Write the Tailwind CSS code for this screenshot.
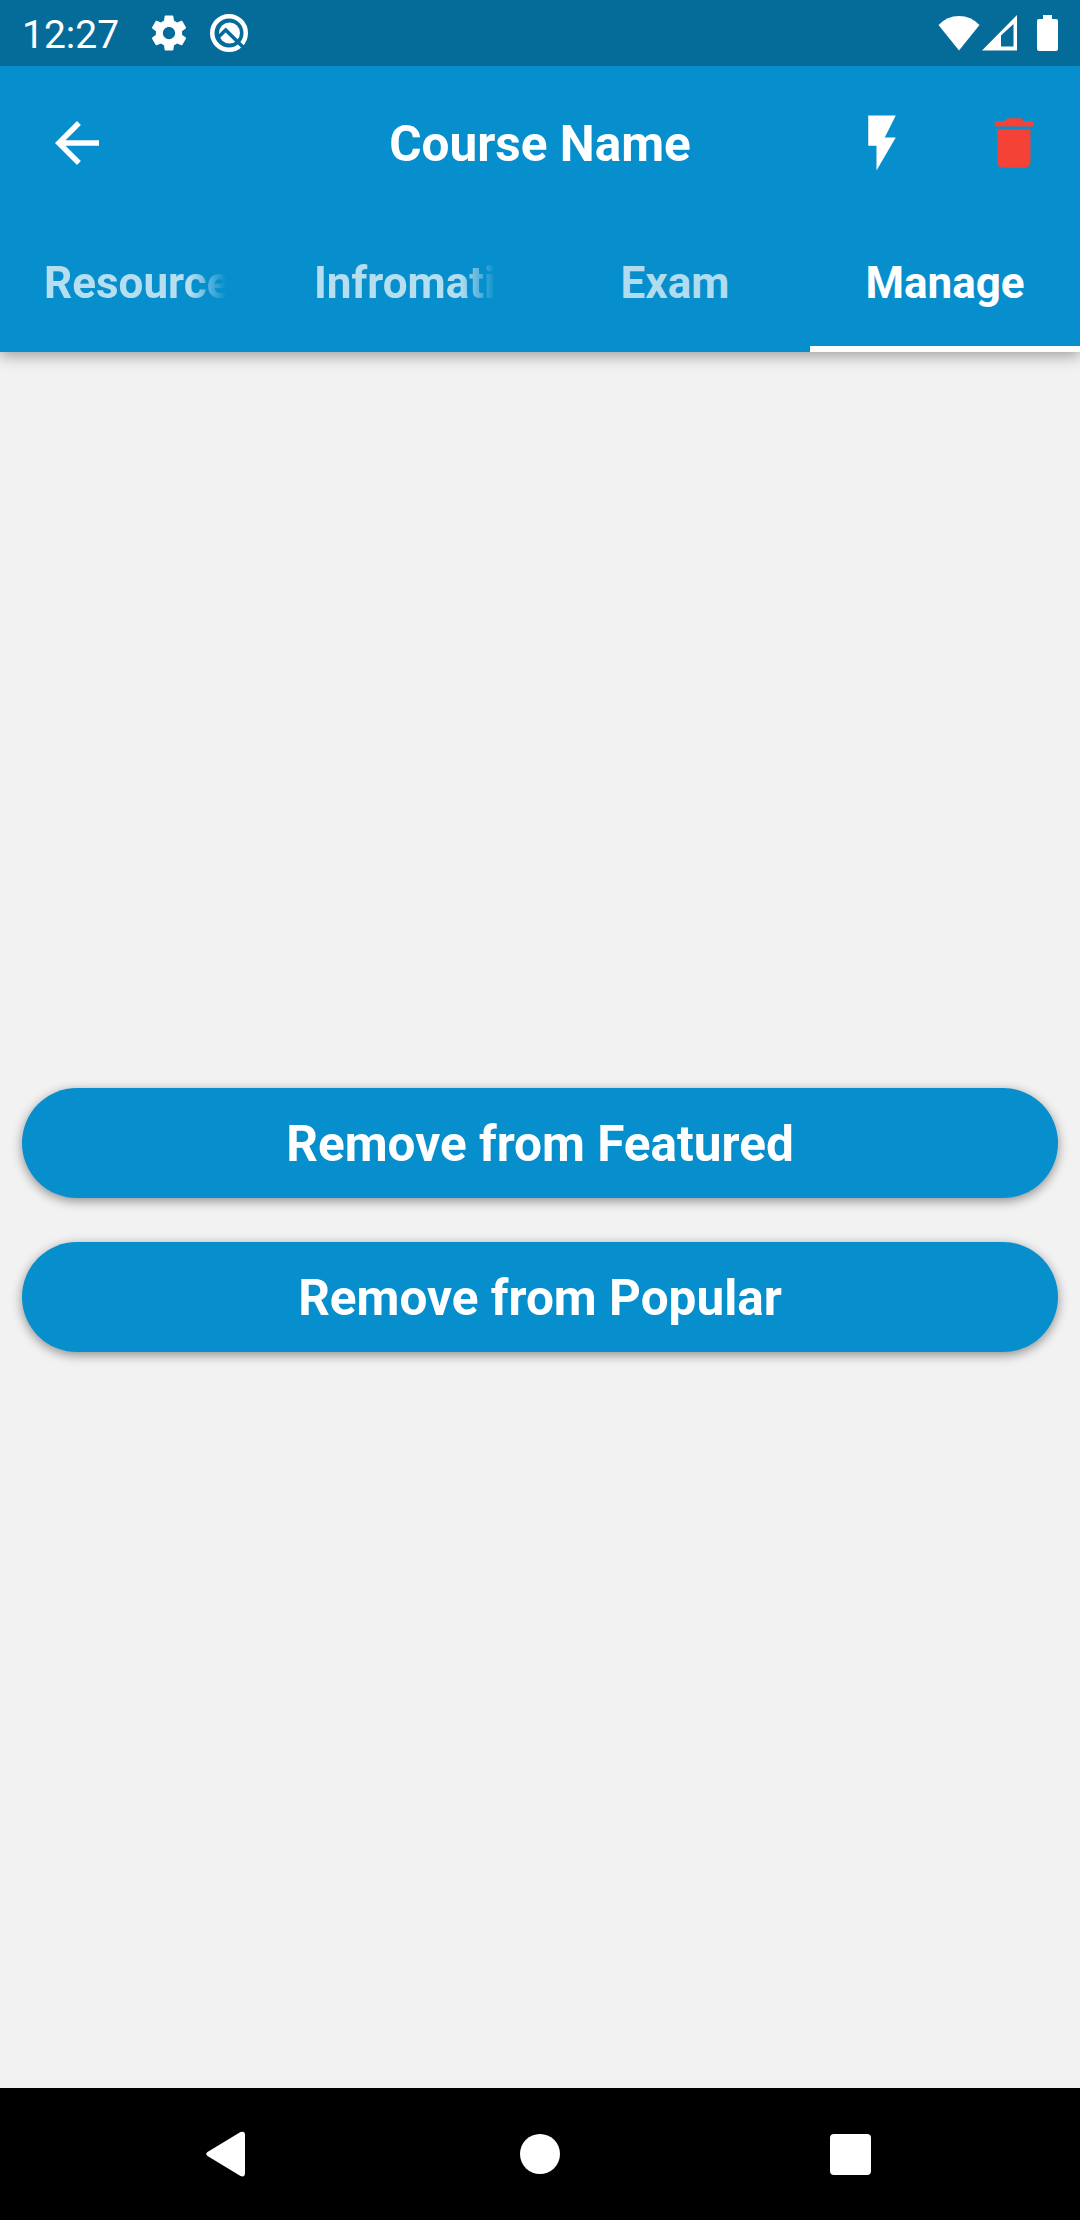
<!DOCTYPE html>
<html lang="en">
<head>
<meta charset="utf-8">
<title>Course Name</title>
<script src="https://cdn.jsdelivr.net/npm/@tailwindcss/browser@4"></script>
</head>
<body class="w-[1080px] h-[2220px] flex flex-col bg-[#f2f2f2] text-white font-['Roboto',sans-serif] overflow-hidden">
  <header class="bg-[#078fcd] shadow-[0_4px_14px_rgba(0,0,0,0.35)] shrink-0">
    <!-- Status bar -->
    <div class="h-[66px] bg-black/25 flex items-center pl-[22px] pr-[22px]">
      <span class="text-[39px] leading-[66px] w-[126px] pt-[3px]">12:27</span>
      <svg class="size-[42px] shrink-0" viewBox="0 0 24 24" fill="currentColor"><path d="M19.43 12.98c.04-.32.07-.64.07-.98s-.03-.66-.07-.98l2.11-1.65c.19-.15.24-.42.12-.64l-2-3.46c-.12-.22-.39-.3-.61-.22l-2.49 1c-.52-.4-1.08-.73-1.69-.98l-.38-2.65C14.46 2.18 14.25 2 14 2h-4c-.25 0-.46.18-.49.42l-.38 2.65c-.61.25-1.17.59-1.69.98l-2.49-1c-.23-.09-.49 0-.61.22l-2 3.46c-.13.22-.07.49.12.64l2.11 1.65c-.04.32-.07.65-.07.98s.03.66.07.98l-2.11 1.65c-.19.15-.24.42-.12.64l2 3.46c.12.22.39.3.61.22l2.49-1c.52.4 1.08.73 1.69.98l.38 2.65c.03.24.24.42.49.42h4c.25 0 .46-.18.49-.42l.38-2.65c.61-.25 1.17-.59 1.69-.98l2.49 1c.23.09.49 0 .61-.22l2-3.46c.12-.22.07-.49-.12-.64l-2.11-1.65zM12 15.5c-1.93 0-3.5-1.57-3.5-3.5s1.57-3.5 3.5-3.5 3.5 1.57 3.5 3.5-1.57 3.5-3.5 3.5z"/></svg>
      <svg class="size-[40px] shrink-0 ml-[19px]" viewBox="0 0 40 40" fill="none">
        <circle cx="20" cy="20" r="16.75" stroke="currentColor" stroke-width="4.500"/>
        <circle cx="20.500" cy="20" r="10.500" fill="currentColor"/>
        <path d="M8 25.500L16.700 17L36 36" stroke="#056b9a" stroke-width="3.500"/>
      </svg>
      <div class="ml-auto flex items-center">
        <svg class="w-[42px] h-[36px]" viewBox="0 0 42 36" fill="currentColor"><path d="M21 35.500L.500 10Q9 1 21 1T41.500 10Z"/></svg>
        <svg class="w-[36px] h-[36px] ml-[2px]" viewBox="0 0 36 36" fill="currentColor" fill-rule="evenodd"><path d="M0 35.500L35 0V35.500ZM19 20.500V31.500H31.500V9Z"/></svg>
        <svg class="w-[21px] h-[36px] ml-[19px]" viewBox="0 0 21 36" fill="currentColor"><path d="M6 0H15V4H19Q21 4 21 6V34Q21 36 19 36H2Q0 36 0 34V6Q0 4 2 4H6Z"/></svg>
      </div>
    </div>
    <!-- App bar -->
    <div class="h-[154px] grid grid-cols-[264px_1fr_264px] items-center">
      <svg class="size-[66px] ml-[44px]" viewBox="0 0 24 24" fill="currentColor"><path d="M20 11H7.830l5.590-5.590L12 4l-8 8 8 8 1.410-1.410L7.830 13H20v-2z"/></svg>
      <h1 class="text-[49.5px] font-bold text-center whitespace-nowrap pt-[2px]">Course Name</h1>
      <div class="grid grid-cols-2 justify-items-center">
        <svg class="size-[66px]" viewBox="0 0 24 24" fill="currentColor"><path d="M7 2v11h3v9l7-12h-4l4-8z"/></svg>
        <svg class="size-[66px] text-[#f44336]" viewBox="0 0 24 24" fill="currentColor"><path d="M6 19c0 1.100.900 2 2 2h8c1.100 0 2-.900 2-2V7H6v12zM19 4h-3.500l-1-1h-5l-1 1H5v2h14V4z"/></svg>
      </div>
    </div>
    <!-- Tabs -->
    <nav class="h-[132px] grid grid-cols-4 text-[44px] font-bold text-white/70 whitespace-nowrap">
      <div class="flex items-center px-[44px] pb-[5.5px]"><span class="w-full overflow-hidden mask-[linear-gradient(to_right,black_calc(100%-36px),transparent)]">Resources</span></div>
      <div class="flex items-center px-[44px] pb-[5.5px]"><span class="w-full overflow-hidden mask-[linear-gradient(to_right,black_calc(100%-36px),transparent)]">Infromation</span></div>
      <div class="flex items-center justify-center pb-[5.5px]">Exam</div>
      <div class="flex items-center justify-center pb-[5.5px] text-white bg-[linear-gradient(to_top,white_5.5px,transparent_5.5px)]">Manage</div>
    </nav>
  </header>
  <main class="flex-1 flex flex-col justify-center gap-[44px] px-[22px]">
    <button class="h-[110px] rounded-full bg-[#078fcd] text-[49.5px] font-bold pt-[2px] shadow-[0_3px_11px_rgba(0,0,0,0.42)]">Remove from Featured</button>
    <button class="h-[110px] rounded-full bg-[#078fcd] text-[49.5px] font-bold pt-[2px] shadow-[0_3px_11px_rgba(0,0,0,0.42)]">Remove from Popular</button>
  </main>
  <!-- System navigation -->
  <footer class="h-[132px] bg-black shrink-0 flex items-center pl-[206px]">
    <svg class="w-[39px] h-[46px]" viewBox="0 0 39 46" fill="currentColor"><path d="M1.500 21L34.500 1Q39 -.500 39 4V42Q39 46.500 34.500 45L1.500 25Q-1 23 1.500 21Z"/></svg>
    <div class="size-[40px] rounded-full bg-white ml-[275px]"></div>
    <div class="size-[41px] rounded-[4px] bg-white ml-[270px]"></div>
  </footer>
</body>
</html>
